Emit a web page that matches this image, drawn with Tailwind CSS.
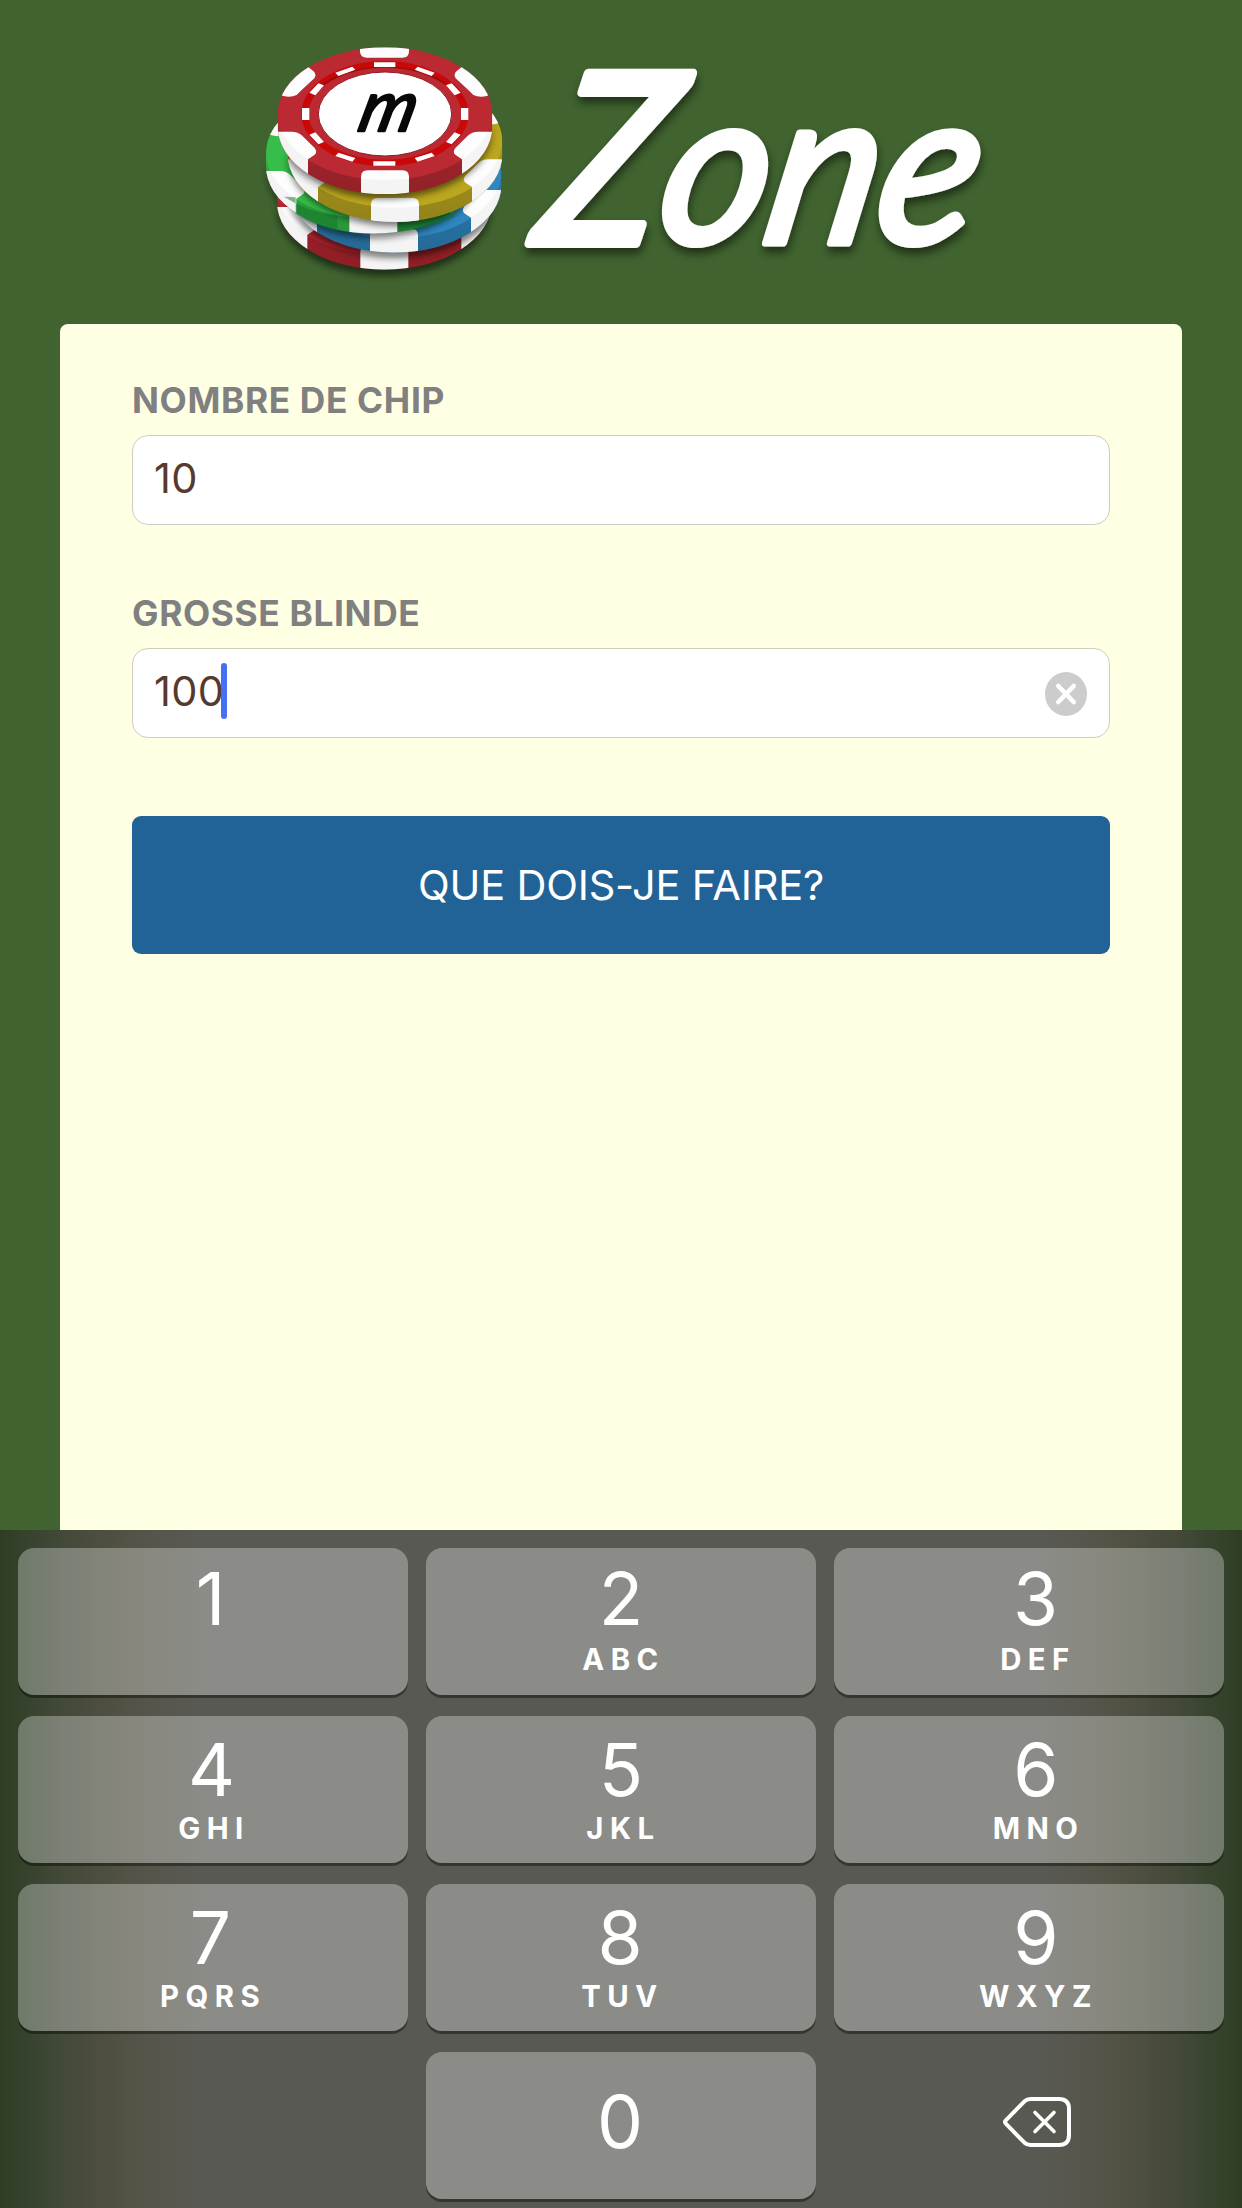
<!DOCTYPE html>
<html lang="fr">
<head>
<meta charset="utf-8">
<title>m Zone</title>
<script src="https://cdn.jsdelivr.net/npm/@tailwindcss/browser@4"></script>
</head>
<body class="flex h-[2208px] w-[1242px] flex-col overflow-hidden bg-[#40632f] font-['Inter',sans-serif]">
<header class="h-[324px] shrink-0">
  <svg class="block h-[324px] w-[1242px]" viewBox="0 0 1242 324" role="img" aria-label="m Zone">
    <defs>
      <clipPath id="body"><path d="M83 251A322 199 0 0 1 727 251V290A322 203 0 0 1 83 290Z"/></clipPath>
      <linearGradient id="shade" x1="0" x2="0" y1="0" y2="1"><stop offset="0" stop-color="#000" stop-opacity=".1"/><stop offset="1" stop-color="#000" stop-opacity=".22"/></linearGradient>
      <filter id="blur" x="-20%" y="-20%" width="140%" height="140%"><feGaussianBlur stdDeviation="10"/></filter>
      <filter id="textShadow" x="-10%" y="-10%" width="120%" height="130%"><feDropShadow dx="1" dy="6" stdDeviation="4" flood-color="#000" flood-opacity=".5"/></filter>
      <g id="chip" clip-path="url(#body)">
        <rect x="80" y="40" width="650" height="460" fill="currentColor"/>
        <path d="M83 251A322 199 0 0 0 727 251V500H83Z" fill="url(#shade)"/>
        <g fill="#fdfdfd">
          <path d="M330 40H477V66Q476 83 458 83H350Q332 83 330 66Z"/>
          <path d="M80 190L100 198Q122 204 140 195Q155 180 193 145Q202 130 187 121L160 100Z"/>
          <path d="M730 190L710 198Q688 204 670 195Q655 180 617 145Q608 130 623 121L650 100Z"/>
          <path d="M80 305H125Q145 306 155 316L194 354Q204 368 192 376L174 388V440H80Z"/>
          <path d="M730 305H685Q665 306 655 316L616 354Q606 368 618 376L636 388V440H730Z"/>
          <path d="M333 500V440Q334 421 352 421H458Q476 421 477 440V500Z"/>
        </g>
        <path d="M83 251A322 199 0 0 0 174 388V450H83ZM333 446Q405 453 477 446V500H333ZM727 251A322 199 0 0 1 636 388V450H727Z" fill="#888" opacity=".08"/>
      </g>
      <path id="cast" d="M83 262A322 205 0 0 0 727 262V300A322 204 0 0 1 83 300Z" fill="#000" opacity=".5" filter="url(#blur)"/>
    </defs>
    <g transform="translate(250 30) scale(.33333)">
      <use href="#cast" x="-2" y="234"/>
      <use href="#cast" x="-34" y="126" opacity=".8"/>
      <use href="#chip" x="-2" y="226" class="text-[#b5262f]"/>
      <g transform="translate(-2 226)" clip-path="url(#body)"><use href="#cast" x="29" y="-46"/></g>
      <use href="#chip" x="27" y="175" class="text-[#2e87c0]"/>
      <g transform="translate(27 175)" clip-path="url(#body)"><use href="#cast" x="-62" y="-54"/></g>
      <use href="#chip" x="-35" y="118" class="text-[#37bd49]"/>
      <path d="M102 500A322 199 0 0 0 262 558V604Q185 585 137 550V502ZM443 556Q560 540 615 500V560Q530 600 443 606Z" fill="#10722a" opacity=".5"/>
      <g transform="translate(-35 118)" clip-path="url(#body)"><use href="#cast" x="65" y="-34"/></g>
      <use href="#chip" x="30" y="83" class="text-[#bba61f]"/>
      <g transform="translate(30 83)" clip-path="url(#body)"><use href="#cast" x="-30" y="-80"/></g>
      <use href="#chip" class="text-[#bb2a33]"/>
      <ellipse cx="405" cy="251" rx="251" ry="158" fill="#c90808"/>
      <path d="M160 230A251 155 0 0 1 650 230A252 146 0 0 0 160 230Z" fill="#840d10" opacity=".6"/>
      <ellipse cx="405" cy="251" rx="229" ry="138" fill="#bb2a33"/>
      <g fill="#fff">
        <path d="M372 97H436V111H372ZM370 394H436V407H370ZM156 234H178V270H156ZM633 234H655V270H633Z"/>
        <path d="M256 128L307 110L316 119L265 138ZM554 128L503 110L494 119L545 138Z"/>
        <path d="M178 188L205 160L222 166L196 196ZM632 188L605 160L588 166L614 196Z"/>
        <path d="M178 314L196 307L222 336L205 343ZM632 314L614 307L588 336L605 343Z"/>
        <path d="M265 368L316 384L307 395L256 378ZM545 368L494 384L503 395L554 378Z"/>
      </g>
      <ellipse cx="405" cy="252" rx="200" ry="126" fill="#fff" stroke="#8f1b22" stroke-width="3"/>
      <text transform="translate(318 303) skewX(-14)" font-family="Lato" font-style="italic" font-weight="400" font-size="212" textLength="168" lengthAdjust="spacingAndGlyphs" fill="#080808" stroke="#080808" stroke-width="7" stroke-linejoin="round">m</text>
    </g>
    <g filter="url(#textShadow)" fill="#fff" stroke="#fff" stroke-linejoin="round" font-family="Lato" font-style="italic" font-weight="400">
      <text transform="translate(532 243) skewX(-12)" font-size="236" stroke-width="10" textLength="120" lengthAdjust="spacingAndGlyphs">Z</text>
      <text transform="translate(652 243) skewX(-11)" font-size="217" stroke-width="7" textLength="316" lengthAdjust="spacingAndGlyphs">one</text>
    </g>
  </svg>
</header>

<main class="mx-[60px] h-[1206px] shrink-0 rounded-t-lg bg-[#ffffe3] px-[72px] pt-[53px]">
  <label class="block h-12 text-[35.3px] leading-[48px] font-bold tracking-[0.65px] text-[#808080]">NOMBRE DE CHIP</label>
  <div class="mt-[10px] flex h-[90px] items-center rounded-2xl border border-[#cdcdc2] bg-white pb-1 pl-[21px] text-[41.5px] text-[#573a2e]"><span class="tracking-[0.4px]">10</span></div>
  <label class="mt-[65px] block h-12 text-[35.3px] leading-[48px] font-bold tracking-[0.65px] text-[#808080]">GROSSE BLINDE</label>
  <div class="relative mt-[10px] flex h-[90px] items-center rounded-2xl border border-[#cdcdc2] bg-white pb-1 pl-[21px] text-[41.5px] text-[#573a2e]">
    <span class="tracking-[0.4px]">100</span>
    <span class="absolute top-[14px] left-[88px] h-14 w-1.5 rounded-full bg-[#4570f2]"></span>
    <svg class="absolute top-[23px] right-[22px] h-11 w-[42px]" viewBox="0 0 42 44"><ellipse cx="21" cy="22" rx="21" ry="22" fill="#ccc"/><path d="M13.3 14L28.7 30M28.7 14L13.3 30" stroke="#fff" stroke-width="4.6" stroke-linecap="round"/></svg>
  </div>
  <button class="mt-[78px] flex h-[138px] w-full items-center justify-center rounded-[9px] bg-[#216396] text-[41.5px] tracking-[-0.2px] text-white">QUE DOIS-JE FAIRE?</button>
</main>

<section class="h-[678px] shrink-0 bg-[linear-gradient(90deg,#2f3d26_0,#36432d_28px,#44493a_64px,#4e4f40_105px,#56554a_150px,#595953_200px,#595953_1042px,#56554a_1092px,#4e4f40_1137px,#44493a_1178px,#36432d_1214px,#2f3d26_1242px)] px-[18px] pt-[18px] text-white">
  <div class="grid grid-cols-3 gap-x-[18px] gap-y-[21px] text-center [&_b]:block [&_b]:h-[73px] [&_b]:text-[73px] [&_b]:leading-[73px] [&_b]:font-normal [&_i]:block [&_i]:pl-[5px] [&_i]:text-[29.3px] [&_i]:leading-[30px] [&_i]:font-bold [&_i]:tracking-[6.5px] [&_i]:not-italic">
    <div class="h-[147px] rounded-2xl bg-white/30 pt-[14px] pr-[5px] shadow-[0_3px_0_rgba(0,0,0,0.4)]"><b>1</b></div>
    <div class="h-[147px] rounded-2xl bg-white/30 pt-[14px] shadow-[0_3px_0_rgba(0,0,0,0.4)]"><b>2</b><i class="mt-[10px]">ABC</i></div>
    <div class="h-[147px] rounded-2xl bg-white/30 pt-[14px] pl-[13px] shadow-[0_3px_0_rgba(0,0,0,0.4)]"><b>3</b><i class="mt-[10px]">DEF</i></div>
    <div class="h-[147px] rounded-2xl bg-white/30 pt-[17px] pr-[3px] shadow-[0_3px_0_rgba(0,0,0,0.4)]"><b>4</b><i class="mt-[8px]">GHI</i></div>
    <div class="h-[147px] rounded-2xl bg-white/30 pt-[17px] shadow-[0_3px_0_rgba(0,0,0,0.4)]"><b>5</b><i class="mt-[8px]">JKL</i></div>
    <div class="h-[147px] rounded-2xl bg-white/30 pt-[17px] pl-[14px] shadow-[0_3px_0_rgba(0,0,0,0.4)]"><b>6</b><i class="mt-[8px]">MNO</i></div>
    <div class="h-[147px] rounded-2xl bg-white/30 pt-[17px] pr-[5px] shadow-[0_3px_0_rgba(0,0,0,0.4)]"><b>7</b><i class="mt-[8px]">PQRS</i></div>
    <div class="h-[147px] rounded-2xl bg-white/30 pt-[17px] pr-[2px] shadow-[0_3px_0_rgba(0,0,0,0.4)]"><b>8</b><i class="mt-[8px]">TUV</i></div>
    <div class="h-[147px] rounded-2xl bg-white/30 pt-[17px] pl-[14px] shadow-[0_3px_0_rgba(0,0,0,0.4)]"><b>9</b><i class="mt-[8px]">WXYZ</i></div>
    <div class="h-[147px]"></div>
    <div class="h-[147px] rounded-2xl bg-white/30 pt-[33px] pr-[2px] shadow-[0_3px_0_rgba(0,0,0,0.4)]"><b>0</b></div>
    <div class="flex h-[147px] justify-center pt-[45px] pl-4">
      <svg class="h-[50px] w-[68px]" viewBox="0 0 68 50" fill="none" stroke="#fff" stroke-linecap="round" stroke-linejoin="round"><path d="M2.8 23.4L21.5 4.3Q24 2 27.5 2H56Q66 2 66 12V38Q66 48 56 48H27.5Q24 48 21.5 45.7L2.8 26.6Q1.2 25 2.8 23.4Z" stroke-width="4"/><path d="M32 15.5L51 34.5M51 15.5L32 34.5" stroke-width="3.6"/></svg>
    </div>
  </div>
</section>
</body>
</html>
